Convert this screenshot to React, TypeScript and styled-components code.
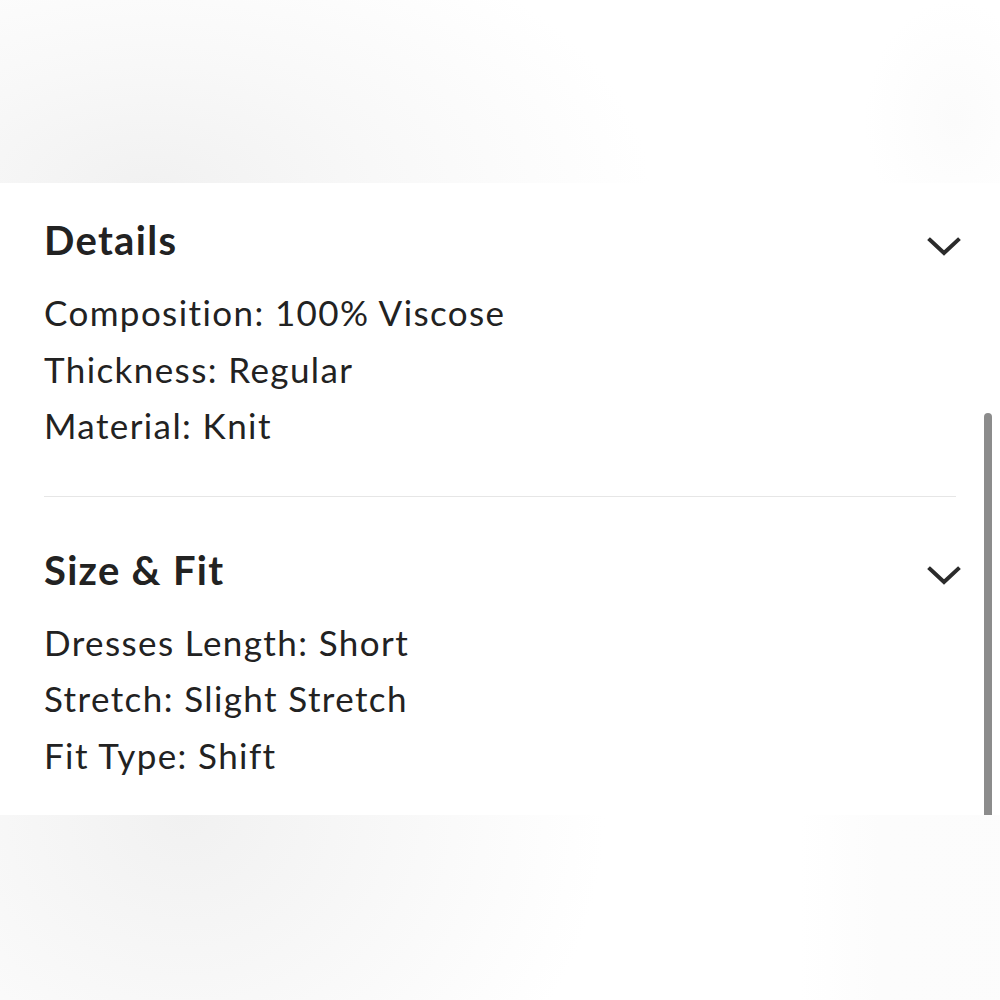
import React from "react";
import styled, { createGlobalStyle } from "styled-components";

const Global = createGlobalStyle`
  html, body { margin: 0; padding: 0; background: #fff; }
  body { font-family: Lato, "Open Sans", sans-serif; }
`;

const Page = styled.div`
  width: 1000px;
  height: 1000px;
  display: flex;
  flex-direction: column;
  overflow: hidden;
  position: relative;
`;

const TopBackdrop = styled.div`
  height: 183px;
  flex: none;
  background:
    radial-gradient(ellipse 90px 120px at 955px 120px, #fbfbfb 0%, rgba(255,255,255,0) 100%),
    radial-gradient(ellipse 500px 280px at 150px 190px, #f1f1f1 0%, #f8f8f8 45%, #ffffff 100%);
`;

const BottomBackdrop = styled.div`
  flex: 1;
  background:
    linear-gradient(90deg, rgba(255,255,255,0) 800px, rgba(250,250,250,0.6) 880px, rgba(251,251,251,0.8) 1000px),
    radial-gradient(ellipse 420px 380px at 185px 0px, #f1f1f1 0%, #f8f8f8 50%, #ffffff 100%);
`;

const Panel = styled.div`
  flex: none;
  height: 632px;
  box-sizing: border-box;
  padding: 29px 44px 0 44px;
  background: #fff;
  position: relative;
`;

const Section = styled.section`
  display: flex;
  flex-direction: column;
`;

const Header = styled.div`
  display: flex;
  align-items: center;
  justify-content: space-between;
  height: 56px;
`;

const Title = styled.h2`
  margin: 0;
  font-family: Lato, sans-serif;
  font-weight: 700;
  font-size: 40px;
  line-height: 56px;
  letter-spacing: 1.3px;
  color: #222;
`;

const Chevron = styled.svg`
  width: 34px;
  height: 20px;
  margin-right: -5px;
  margin-top: 13px;
  flex: none;
`;

const Body = styled.div`
  margin-top: 16px;
  display: flex;
  flex-direction: column;
`;

const Line = styled.div`
  font-family: Lato, sans-serif;
  font-size: 35px;
  line-height: 56.5px;
  letter-spacing: 1.4px;
  color: #222;
  white-space: nowrap;
`;

const Divider = styled.hr`
  border: none;
  height: 1px;
  background: #e6e6e6;
  margin: 42px 0 45px 0;
`;

const Scrollbar = styled.div`
  position: absolute;
  right: 8px;
  bottom: 0;
  width: 8px;
  height: 402px;
  background: #8c8c8c;
  border-radius: 4px 4px 0 0;
`;

const ChevronIcon = () => (
  <Chevron viewBox="0 0 34 20" fill="none">
    <path d="M3 3 L17 16 L31 3" stroke="#2b2b2b" strokeWidth="4" strokeLinecap="square" strokeLinejoin="miter" />
  </Chevron>
);

const sections = [
  {
    title: "Details",
    lines: ["Composition: 100% Viscose", "Thickness: Regular", "Material: Knit"],
  },
  {
    title: "Size & Fit",
    lines: ["Dresses Length: Short", "Stretch: Slight Stretch", "Fit Type: Shift"],
  },
];

export default function App() {
  return (
    <Page>
      <Global />
      <TopBackdrop />
      <Panel>
        {sections.map((s, i) => (
          <React.Fragment key={s.title}>
            {i > 0 && <Divider />}
            <Section>
              <Header>
                <Title>{s.title}</Title>
                <ChevronIcon />
              </Header>
              <Body>
                {s.lines.map((l) => (
                  <Line key={l}>{l}</Line>
                ))}
              </Body>
            </Section>
          </React.Fragment>
        ))}
        <Scrollbar />
      </Panel>
      <BottomBackdrop />
    </Page>
  );
}
